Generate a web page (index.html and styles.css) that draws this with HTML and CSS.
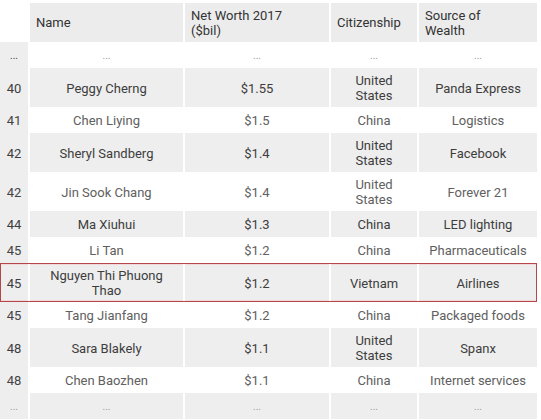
FILE: index.html
```html
<!DOCTYPE html>
<html>
<head>
<meta charset="utf-8">
<link rel="stylesheet" href="styles.css">
</head>
<body>
<div class="table">
  <div class="row head">
    <div class="cell idx blank"></div>
    <div class="cell">Name</div>
    <div class="cell">Net Worth 2017<br>($bil)</div>
    <div class="cell">Citizenship</div>
    <div class="cell">Source of<br>Wealth</div>
  </div>
  <div class="row odd dots">
    <div class="cell idx">...</div>
    <div class="cell">...</div>
    <div class="cell">...</div>
    <div class="cell">...</div>
    <div class="cell">...</div>
  </div>
  <div class="row even">
    <div class="cell idx">40</div>
    <div class="cell">Peggy Cherng</div>
    <div class="cell">$1.55</div>
    <div class="cell">United<br>States</div>
    <div class="cell">Panda Express</div>
  </div>
  <div class="row odd">
    <div class="cell idx">41</div>
    <div class="cell">Chen Liying</div>
    <div class="cell">$1.5</div>
    <div class="cell">China</div>
    <div class="cell">Logistics</div>
  </div>
  <div class="row even">
    <div class="cell idx">42</div>
    <div class="cell">Sheryl Sandberg</div>
    <div class="cell">$1.4</div>
    <div class="cell">United<br>States</div>
    <div class="cell">Facebook</div>
  </div>
  <div class="row odd">
    <div class="cell idx">42</div>
    <div class="cell">Jin Sook Chang</div>
    <div class="cell">$1.4</div>
    <div class="cell">United<br>States</div>
    <div class="cell">Forever 21</div>
  </div>
  <div class="row even">
    <div class="cell idx">44</div>
    <div class="cell">Ma Xiuhui</div>
    <div class="cell">$1.3</div>
    <div class="cell">China</div>
    <div class="cell">LED lighting</div>
  </div>
  <div class="row odd">
    <div class="cell idx">45</div>
    <div class="cell">Li Tan</div>
    <div class="cell">$1.2</div>
    <div class="cell">China</div>
    <div class="cell">Pharmaceuticals</div>
  </div>
  <div class="row even hl">
    <div class="cell idx">45</div>
    <div class="cell">Nguyen Thi Phuong<br>Thao</div>
    <div class="cell">$1.2</div>
    <div class="cell">Vietnam</div>
    <div class="cell">Airlines</div>
  </div>
  <div class="row odd">
    <div class="cell idx">45</div>
    <div class="cell">Tang Jianfang</div>
    <div class="cell">$1.2</div>
    <div class="cell">China</div>
    <div class="cell">Packaged foods</div>
  </div>
  <div class="row even">
    <div class="cell idx">48</div>
    <div class="cell">Sara Blakely</div>
    <div class="cell">$1.1</div>
    <div class="cell">United<br>States</div>
    <div class="cell">Spanx</div>
  </div>
  <div class="row odd">
    <div class="cell idx">48</div>
    <div class="cell">Chen Baozhen</div>
    <div class="cell">$1.1</div>
    <div class="cell">China</div>
    <div class="cell">Internet services</div>
  </div>
  <div class="row even dots">
    <div class="cell idx">...</div>
    <div class="cell">...</div>
    <div class="cell">...</div>
    <div class="cell">...</div>
    <div class="cell">...</div>
  </div>
</div>
</body>
</html>
```

FILE: styles.css
```css
html, body {
  margin: 0;
  padding: 0;
  background: #ffffff;
}

.table {
  padding-top: 3px;
  width: 537px;
  font-family: Roboto, "Liberation Sans", sans-serif;
  font-size: 13px;
}

.row {
  display: grid;
  grid-template-columns: 28px 153px 144px 86px 118px;
  column-gap: 2px;
  min-height: 26px;
}

.cell {
  display: flex;
  align-items: center;
  justify-content: center;
  text-align: center;
  line-height: 15px;
  padding: 5px 2px 4px;
  color: #444;
}

.idx {
  background: #eeeeee;
  color: #444;
}

.head .cell {
  background: #ececec;
  color: #333;
  justify-content: flex-start;
  text-align: left;
  padding: 4px 6px;
  min-height: 39px;
  box-sizing: border-box;
}

.head .cell.blank {
  background: #ffffff;
}

.even .cell {
  background: #eeeeee;
  color: #3d3d3d;
}

.odd .cell {
  background: #ffffff;
  color: #606060;
}

.odd .cell.idx {
  background: #eeeeee;
  color: #444;
}

.dots .cell {
  color: #9a9a9a;
  font-size: 10px;
}

.hl {
  outline: 1px solid #b5474a;
  outline-offset: -1px;
}

.hl .cell {
  box-shadow: inset 0 2px 0 #f2d9d9, inset 0 -2px 0 #f2d9d9;
}
```
